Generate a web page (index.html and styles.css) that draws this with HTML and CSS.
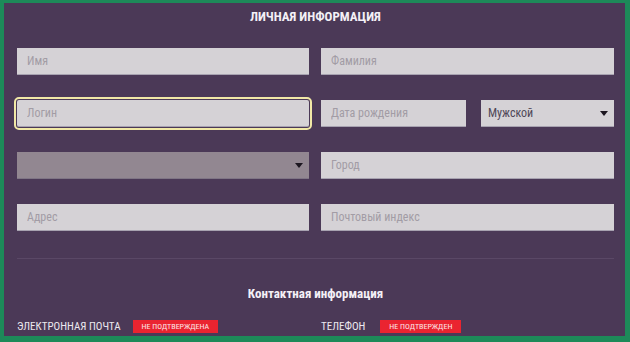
FILE: index.html
```html
<!DOCTYPE html>
<html>
<head>
    <title>Личная информация</title>
    <link rel="stylesheet" href="styles.css">
</head>
<body>
    <div class="panel">
        <h2 class="title">ЛИЧНАЯ ИНФОРМАЦИЯ</h2>
        <form class="grid">
            <input class="field" type="text" placeholder="Имя">
            <input class="field" type="text" placeholder="Фамилия">

            <input class="field focused" type="text" placeholder="Логин">
            <div class="pair">
                <input class="field date" type="text" placeholder="Дата рождения">
                <div class="field select light">
                    <span>Мужской</span>
                    <span class="caret"></span>
                </div>
            </div>

            <div class="field select dark">
                <span></span>
                <span class="caret"></span>
            </div>
            <input class="field" type="text" placeholder="Город">

            <input class="field" type="text" placeholder="Адрес">
            <input class="field" type="text" placeholder="Почтовый индекс">
        </form>

        <div class="divider"></div>

        <h3 class="subtitle">Контактная информация</h3>
        <div class="contacts">
            <div class="contact">
                <span class="label">ЭЛЕКТРОННАЯ ПОЧТА</span>
                <span class="badge">НЕ ПОДТВЕРЖДЕНА</span>
            </div>
            <div class="contact">
                <span class="label">ТЕЛЕФОН</span>
                <span class="badge">НЕ ПОДТВЕРЖДЕН</span>
            </div>
        </div>
    </div>
</body>
</html>
```

FILE: styles.css
```css
html, body {
    margin: 0;
    height: 100%;
}
body {
    background-color: #1d8a59;
    padding: 3px 5px 6px 4px;
    box-sizing: border-box;
    font-family: "Roboto", sans-serif;
    font-stretch: 75%;
}
.panel {
    background-color: #4b3957;
    height: 100%;
    padding: 0 11px 0 13px;
    box-sizing: border-box;
    overflow: hidden;
}
.title {
    margin: 0;
    padding-top: 6px;
    height: 45px;
    box-sizing: border-box;
    text-align: center;
    color: #f4f0f6;
    font-size: 13px;
    font-weight: bold;
}
.grid {
    display: grid;
    grid-template-columns: 292px 293px;
    column-gap: 12px;
    row-gap: 25px;
    margin: 0;
}
.field {
    height: 27px;
    box-sizing: border-box;
    border: none;
    border-bottom: 1px solid #a7a2b0;
    background-color: #d5d2d6;
    padding: 0 10px;
    font-family: inherit;
    font-stretch: inherit;
    font-size: 12px;
    color: #4a4450;
    outline: none;
}
.field::placeholder {
    color: #a29ca5;
}
.focused {
    outline: 2px solid #f1e8a6;
    outline-offset: 1px;
    border-radius: 2px;
}
.pair {
    display: flex;
    gap: 15px;
}
.date {
    width: 145px;
}
.select {
    display: flex;
    align-items: center;
    justify-content: space-between;
    padding: 0 6px 0 7px;
}
.select.light {
    flex: 1;
    color: #4f4756;
}
.select.dark {
    background-color: #928791;
    border-bottom-color: #7f7585;
}
.caret {
    width: 0;
    height: 0;
    border-left: 4px solid transparent;
    border-right: 4px solid transparent;
    border-top: 5px solid #1c1620;
}
.divider {
    margin-top: 27px;
    height: 1px;
    background-color: #5a4866;
}
.subtitle {
    margin: 0;
    padding-top: 27px;
    text-align: center;
    color: #f4f0f6;
    font-size: 13px;
    font-weight: bold;
}
.contacts {
    display: flex;
    margin-top: 19px;
}
.contact {
    display: flex;
    align-items: center;
    gap: 12px;
}
.contact:first-child {
    width: 304px;
}
.contact:last-child {
    gap: 15px;
}
.label {
    color: #ece8ee;
    font-size: 11px;
}
.badge {
    background-color: #ea2430;
    color: #fbe6e8;
    font-size: 8px;
    height: 13px;
    line-height: 13px;
    padding: 0 9px;
}
```
